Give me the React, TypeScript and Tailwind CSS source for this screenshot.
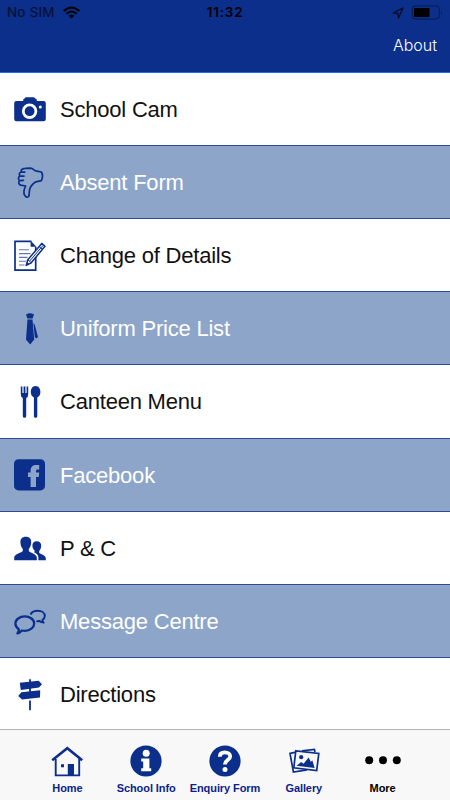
import type { ReactNode } from 'react';
import clsx from 'clsx';

const NAVY = '#0b2f8a';

type MenuItem = {
  label: string;
  icon: ReactNode;
};

const menuItems: MenuItem[] = [
  {
    label: 'School Cam',
    icon: (
      <>
        <path
          d="M9.2 8V6.8Q9.4 5.6 10.6 5.4L11.6 4.2H20L21.2 5.4Q22.6 5.6 22.8 6.8V8H29.6Q31.8 8 31.8 10.3V26Q31.8 28.2 29.6 28.2H2.4Q0.2 28.2 0.2 26V10.3Q0.2 8 2.4 8Z"
          fill={NAVY}
        />
        <circle cx="15.6" cy="18.2" r="6.3" fill="none" stroke="#fff" strokeWidth="2.8" />
        <circle cx="26.3" cy="14" r="1.5" fill="#fff" />
      </>
    ),
  },
  {
    label: 'Absent Form',
    icon: (
      <path
        d="M7 6C6.8 3.6 8.8 2.4 11.4 2.4L16.6 2.2C19.2 2.2 20 5 22.8 5.2L27.4 6C29 8.6 28.6 12 27.4 14.6L21.8 15.8C18.6 17.8 16.6 20.4 15.6 23.4L15 29.8C13.8 32 11.8 31.4 10.6 29.2C9.4 27 9.8 23.8 11.6 20L6.6 19.2C4.6 18.4 4.2 16.4 5.6 14.6C3.8 13.2 4.2 11 6 10C4.8 8.4 5.2 6.6 7 6ZM7 6L10.8 6.2M6 10L10 10.2M5.6 14.6L9.4 14.4"
        fill="none"
        stroke={NAVY}
        strokeWidth="1.7"
        strokeLinecap="round"
        strokeLinejoin="round"
      />
    ),
  },
  {
    label: 'Change of Details',
    icon: (
      <>
        <path d="M17.5 2.4H1V31.2H21.7V8" fill="none" stroke={NAVY} strokeWidth="1.7" />
        <path d="M16.6 1.7L22.5 7.8H16.6Z" fill={NAVY} />
        <path
          d="M5 10.8H15M5 14.6H16.5M5 18.4H13.5M5 22.2H12M5 26H10.5"
          stroke={NAVY}
          strokeOpacity="0.65"
          strokeWidth="1.1"
        />
        <path
          d="M12.2 26.4L13.8 20.8L27.8 4.4L31 7.2L17.2 23.8Z"
          fill="#fff"
          stroke={NAVY}
          strokeWidth="1.5"
          strokeLinejoin="round"
        />
        <path d="M15.6 22.2L29 6.4M25.2 7.6L28.4 10.4M13.8 20.8L17.2 23.8" stroke={NAVY} strokeWidth="1" />
        <path d="M11.8 27L13 23L15.4 25Z" fill={NAVY} />
      </>
    ),
  },
  {
    label: 'Uniform Price List',
    icon: (
      <g fill={NAVY}>
        <path d="M12 2.4Q16 0.2 20 2.4L18.6 6.6H13.4Z" />
        <path d="M13.5 7.4H18.5L20.2 27.4L16.2 32.6L12 27.4Z" />
        <path d="M19.4 11L20.8 12.8L24 25L22.2 26.6L20.8 25Z" />
      </g>
    ),
  },
  {
    label: 'Canteen Menu',
    icon: (
      <g fill={NAVY}>
        <path d="M6.8 1.4H8.4V8H9.6V1.4H11.4V8H12.6V1.4H14.2V9.2Q14.2 12 12.2 13V31.2Q12.2 32.8 10.5 32.8Q8.8 32.8 8.8 31.2V13Q6.8 12 6.8 9.2Z" />
        <path d="M21.6 1C24.8 1 26.4 4 26.4 6.8C26.4 9.8 25.2 11.6 23.3 12.4V31.2Q23.3 32.8 21.6 32.8Q19.9 32.8 19.9 31.2V12.4C18 11.6 16.8 9.8 16.8 6.8C16.8 4 18.4 1 21.6 1Z" />
      </g>
    ),
  },
  {
    label: 'Facebook',
    icon: (
      <>
        <rect x="0" y="0.2" width="31" height="31.2" rx="4.5" fill={NAVY} />
        <path
          d="M16.6 28V18H14V13.6H16.6V11.6C16.6 8 18.6 6 22.4 6H25.2V10.4H23.6C22.4 10.4 22 10.9 22 11.9V13.6H25.2L24.7 18H22V28Z"
          fill="#8ca5c9"
        />
      </>
    ),
  },
  {
    label: 'P & C',
    icon: (
      <g fill={NAVY}>
        <path d="M11.8 4.7C15.4 4.7 17.2 6.8 17.2 10C17.2 13.4 16 15.6 14.8 17V19C15.4 20.6 22.8 21.8 22.8 25.6V28.2H0.2V25.6C0.2 21.8 8.2 20.6 8.8 19V17C7.6 15.6 6.4 13.4 6.4 10C6.4 6.8 8.2 4.7 11.8 4.7Z" />
        <path d="M22.6 9.2C25.6 9.2 27.2 11 27.2 13.6C27.2 16.2 26.2 18 25.2 19V20.8C26 22.2 31.8 23 31.8 26.2V28.2H24.4V25.4C24.4 22.6 22 21.2 20 20.2C20.6 19.8 20.8 19.4 20.8 18.8C19.4 17.6 18.4 16 18.4 13.6C18.4 11 19.8 9.2 22.6 9.2Z" />
      </g>
    ),
  },
  {
    label: 'Message Centre',
    icon: (
      <g fill="none" stroke={NAVY} strokeWidth="2.3" strokeLinejoin="round" strokeLinecap="round">
        <path d="M4.8 24.2C2.6 22.8 1.4 20.8 1.4 18.6C1.4 14.6 5.6 11.4 10.8 11.4S20.2 14.6 20.2 18.6S16 25.8 10.8 25.8C9.8 25.8 8.8 25.7 7.9 25.5C6.6 27 5 28.2 3.4 28.4C4.4 27.2 4.9 25.8 4.8 24.2Z" />
        <path
          d="M17 8.8C18 6.8 20.8 5.8 23.8 5.8C27.8 5.8 30.8 8 30.8 11C30.8 12.6 29.8 14 28.4 15C28.4 16.2 28.8 17 29.6 17.6C28 17.4 26.6 17 25.8 16.1L23.2 16.2"
          strokeWidth="2"
        />
      </g>
    ),
  },
  {
    label: 'Directions',
    icon: (
      <g fill={NAVY}>
        <path d="M15.1 1.2H16.9V5H15.1ZM15.1 10H16.9V14H15.1ZM15.1 22.4H16.9V32.3H15.1Z" />
        <path d="M5.8 4.8L24.6 2.8L28 6.2L25 9.6L6.8 12Z" />
        <path d="M26.2 12.2L26 19.4L8 21.4L4.2 18L7.4 14.2Z" />
      </g>
    ),
  },
];

const tabs = [
  {
    label: 'Home',
    icon: (
      <>
        <path d="M4.7 14V30.4H28.2V14" fill="none" stroke={NAVY} strokeWidth="1.9" />
        <path d="M1.2 15.2L16.3 3.2L31.2 15.2" fill="none" stroke={NAVY} strokeWidth="2.6" />
        <path d="M16.8 19H23V30.4H16.8ZM10 19.2H13V22.2H10Z" fill={NAVY} />
      </>
    ),
  },
  {
    label: 'School Info',
    icon: (
      <>
        <circle cx="16" cy="16" r="15.6" fill={NAVY} />
        <circle cx="16.2" cy="8.2" r="3.5" fill="#fff" />
        <path d="M11.2 13.4H19.4V23.2H21.2V26.2H11.2V23.2H13.2V16.4H11.2Z" fill="#fff" />
      </>
    ),
  },
  {
    label: 'Enquiry Form',
    icon: (
      <>
        <circle cx="16" cy="16" r="15.6" fill={NAVY} />
        <path
          d="M10.8 11.8C10.8 8.8 13 7.4 15.8 7.4C19 7.4 21.2 9 21.2 11.6C21.2 14.8 16 15 16 19.4"
          fill="none"
          stroke="#fff"
          strokeWidth="3.8"
        />
        <circle cx="16" cy="24.4" r="2.5" fill="#fff" />
      </>
    ),
  },
  {
    label: 'Gallery',
    icon: (
      <>
        <path d="M8 7.2L2 8.4L5.4 27L19 24.8M14 5.9L26.4 4.4L27 7" fill="none" stroke={NAVY} strokeWidth="1.7" />
        <path d="M7.8 5.8L30.8 8.4L28.7 25.6L5.8 22.8Z" fill="#f8f8f8" stroke={NAVY} strokeWidth="1.7" />
        <circle cx="13.2" cy="12.2" r="2.1" fill={NAVY} />
        <path d="M8.6 20.8L13.2 17L15.6 18.8L20.6 12.4L22.8 16.8L24.4 15.4L26.6 23Z" fill={NAVY} />
      </>
    ),
  },
  {
    label: 'More',
    icon: (
      <>
        <circle cx="2.2" cy="15.2" r="4" />
        <circle cx="16" cy="15.2" r="4" />
        <circle cx="29.8" cy="15.2" r="4" />
      </>
    ),
  },
];

const StatusBar = () => (
  <div className="flex h-[25px] items-center pl-[7px] pr-[7px] font-['Inter',sans-serif] leading-none text-black">
    <div className="flex flex-1 items-center gap-2">
      <span className="text-[13.5px] tracking-[0.2px] opacity-70">No SIM</span>
      <svg width="17" height="13" viewBox="0 0 17 13" className="-mt-px">
        <g fill="none" stroke="#000" strokeWidth="2.1">
          <path d="M0.8 5Q8.5 -2 16.2 5" />
          <path d="M3.4 7.8Q8.5 3.2 13.6 7.8" />
        </g>
        <path d="M8.5 12.6L5.6 9.8Q8.5 7.4 11.4 9.8Z" />
      </svg>
    </div>
    <span className="text-[13.5px] font-semibold tracking-[0.8px]">11:32</span>
    <div className="flex flex-1 items-center justify-end gap-[7px]">
      <svg width="12" height="12" viewBox="0 0 12 12">
        <path
          d="M1 6L11 1L6.4 11L5.8 6.2Z"
          fill="none"
          stroke="#000"
          strokeOpacity="0.8"
          strokeWidth="1.2"
          strokeLinejoin="round"
        />
      </svg>
      <svg width="32" height="15" viewBox="0 0 32 15">
        <rect x="1.3" y="1" width="27" height="13" rx="3.2" fill="none" stroke="#000" strokeOpacity="0.45" />
        <rect x="3" y="3" width="15.5" height="9" rx="0.8" />
        <path d="M30 5.2Q31.6 7.5 30 9.8Z" fillOpacity="0.5" />
      </svg>
    </div>
  </div>
);

const MenuRow = ({ item, index }: { item: MenuItem; index: number }) => (
  <li
    className={clsx(
      'flex items-start border-b border-[#2f4a94] pl-3.5',
      index === 4 ? 'h-[74px]' : 'h-[73px]',
      index % 2 ? 'bg-[#8ca5c9] text-white' : 'bg-white text-[#111111]'
    )}
  >
    <svg width="32" height="33" viewBox="0 0 32 33" className="mt-5 shrink-0">
      {item.icon}
    </svg>
    <span className="ml-3.5 mt-[21px] text-[22px] leading-8 tracking-[-0.21px]">{item.label}</span>
  </li>
);

const App = () => {
  return (
    <div className="flex h-[800px] w-[450px] flex-col overflow-hidden bg-white font-['Liberation_Sans',Arial,sans-serif]">
      <header className="h-[73px] shrink-0 border-b border-[#1a6dff] bg-[#0b2f8a]">
        <StatusBar />
        <div className="flex justify-end pr-[13px] pt-2.5">
          <button className="font-['Inter',sans-serif] text-base font-light leading-5 text-white">
            About
          </button>
        </div>
      </header>

      <ul className="h-[656px] shrink-0 overflow-hidden">
        {menuItems.map((item, index) => (
          <MenuRow key={item.label} item={item} index={index} />
        ))}
      </ul>

      <nav className="grid h-[71px] shrink-0 grid-cols-5 border-t border-[#b2b2b2] bg-[#f8f8f8] px-7 pt-[15px]">
        {tabs.map((tab) => (
          <button
            key={tab.label}
            className={clsx(
              'flex flex-col items-center text-[11px] font-bold',
              tab.label === 'More' ? 'text-black' : 'text-[#0b1f8a]'
            )}
          >
            <svg width="32" height="32" viewBox="0 0 32 32" className="shrink-0 overflow-visible">
              {tab.icon}
            </svg>
            <span className="mt-1 whitespace-nowrap leading-[14px] tracking-[-0.08px]">{tab.label}</span>
          </button>
        ))}
      </nav>
    </div>
  );
};

export default App;
